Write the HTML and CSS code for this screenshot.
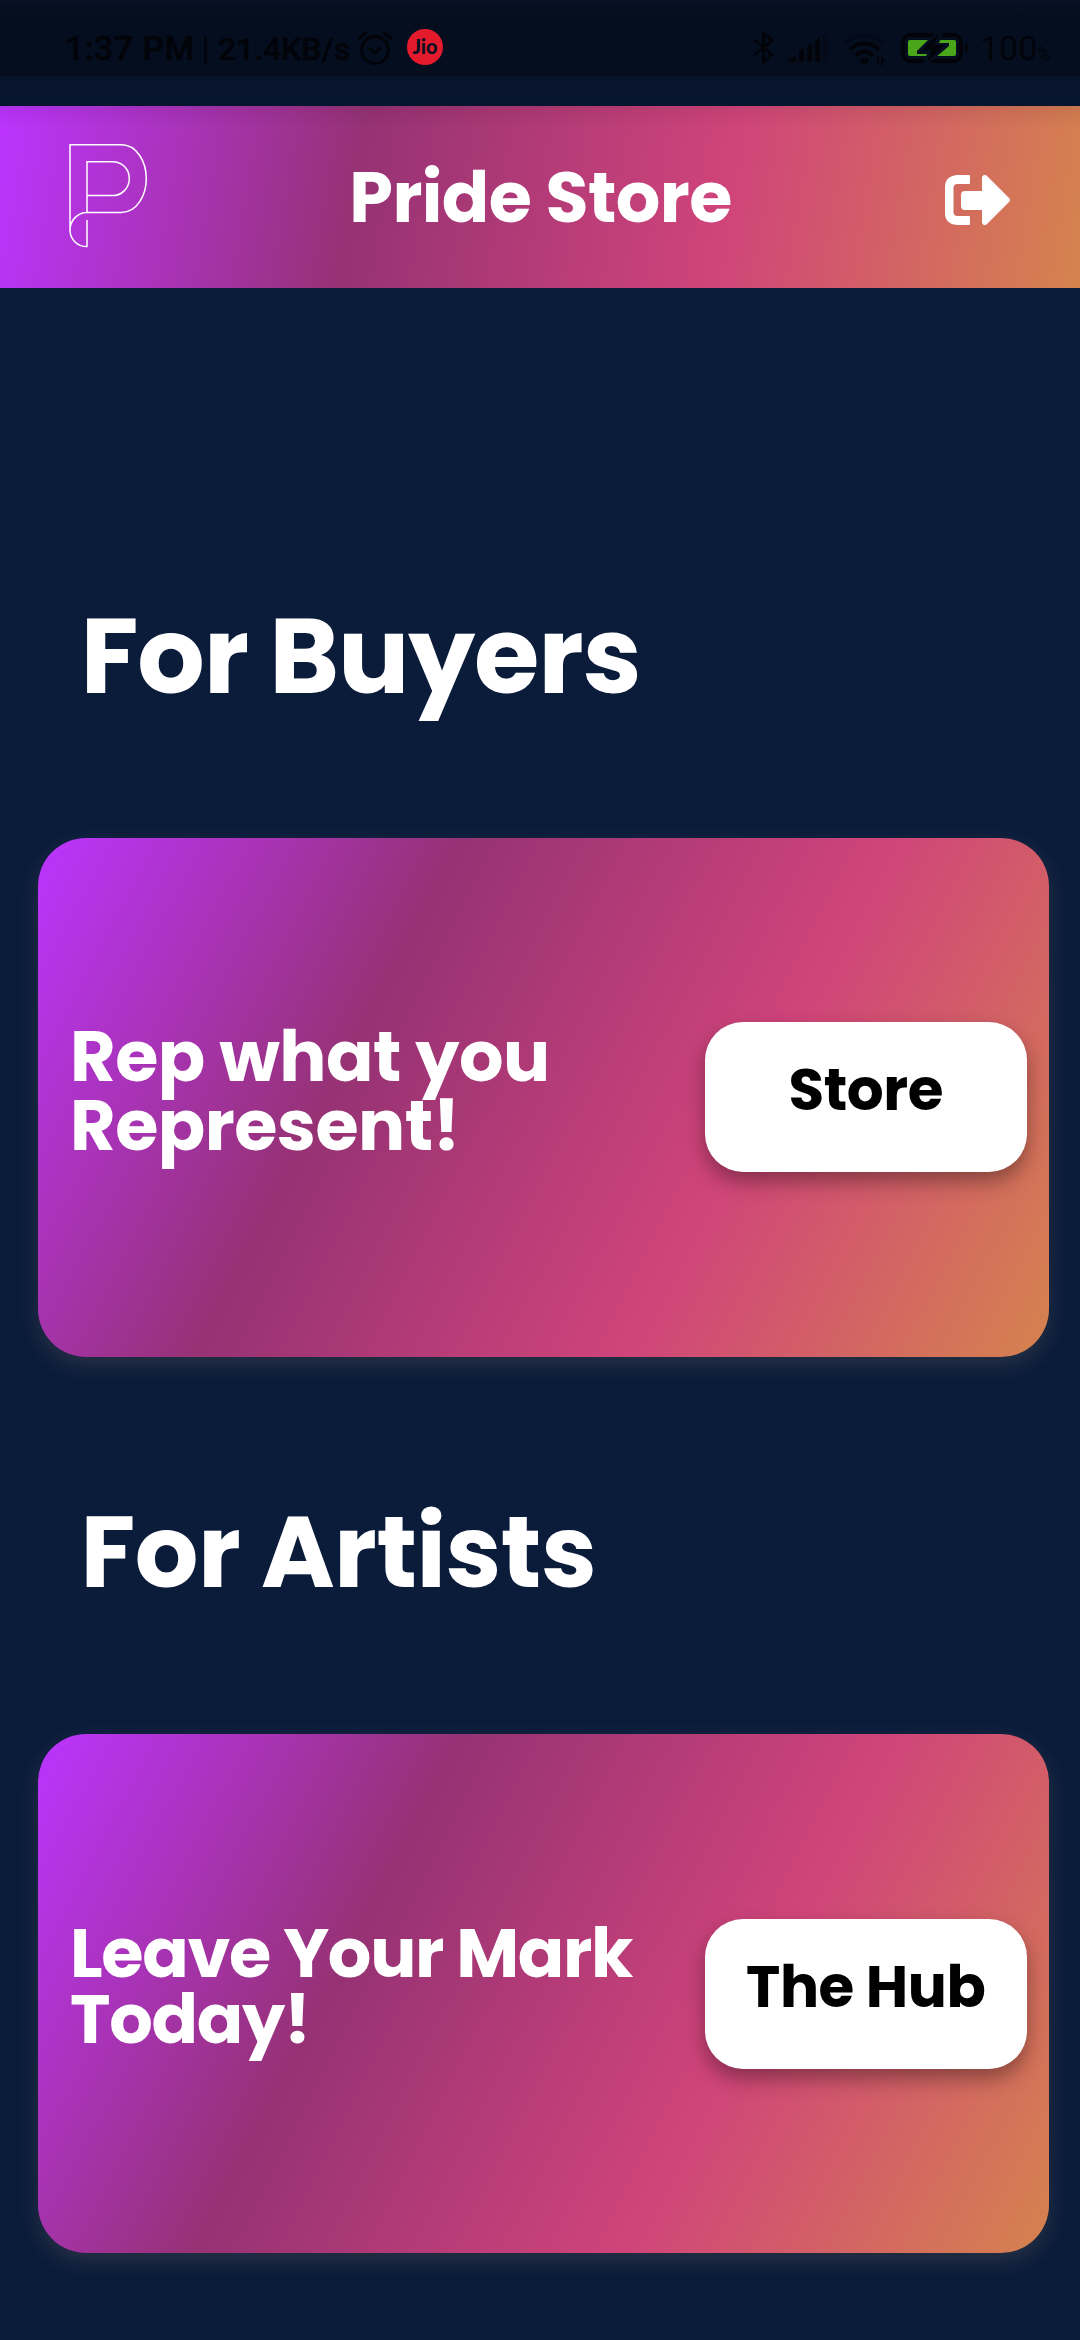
FILE: index.html
```
<!DOCTYPE html>
<html lang="en">
<head>
<meta charset="utf-8">
<title>Pride Store</title>
<link rel="stylesheet" href="styles.css">
</head>
<body>
<div class="status-bar">
  <div class="status-left">
    <span class="clock">1:37 PM</span><span class="divider"></span><span class="speed">21.4KB/s</span>
    <svg class="alarm" viewBox="0 0 36 34" fill="none" stroke="currentColor" stroke-width="3" stroke-linecap="round"><circle cx="18" cy="19" r="13.500"/><path d="M2 7.500L8.500 2M34 7.500L27.500 2M13 17.500l5 4.500 5-4.500"/></svg>
    <span class="jio"><span class="jio-text">Jio</span></span>
  </div>
  <div class="status-right">
    <svg class="bluetooth" viewBox="0 0 22 36" fill="none" stroke="currentColor" stroke-width="2.800" stroke-linejoin="round" stroke-linecap="round"><path d="M2 11L19 25L10.500 33.500V2.500L19 11L2 25"/></svg>
    <svg class="signal" viewBox="0 0 40 30" fill="currentColor"><path d="M0 29q0-2 2-3l6-3v6zM11 18l5-3v14h-5zM19 13l5-3v19h-5zM27 8l5-4v25h-5z"/><path class="faint" d="M35 3l5-3v29h-5z"/></svg>
    <svg class="wifi" viewBox="0 0 42 34" fill="none" stroke="currentColor" stroke-width="4"><path class="faint" d="M1 10.500C11 .5 29 .5 40 10.500"/><path d="M6 16.500C14 8 26 8 35 16.500M12 23C17 17 24 17 29 23"/><path fill="currentColor" stroke="none" d="M16 27c3-3 6-3 9 0q0 2-4.500 5.500Q16 29 16 27zM35 23.500v9.500l-4-4h2v-5.500zM37 33v-9.500l5 5h-3v4.500z"/></svg>
    <svg class="battery" viewBox="0 0 68 30"><rect x="2" y="2" width="58" height="26" rx="7" fill="none" stroke="currentColor" stroke-width="4"/><rect class="charge" x="7" y="7" width="48" height="16" rx="2"/><path class="bolt" d="M34 0h8l-4 10h10v3L28 30h-6l4-9H16v-3z"/><path fill="currentColor" d="M37 1L21 17h10l-5 12 17-17H33zM64 10c5 0 5 10 0 10z"/></svg>
    <span class="percent">100<small>%</small></span>
  </div>
</div>
<header class="app-bar">
  <svg class="logo" viewBox="0 0 79 104" fill="none" stroke="#fff" stroke-width="1.500"><path d="M1 86V.8H52.500C68 .8 77.300 18 77.300 34.500S68 68.500 52.500 68.500H18C8 68.500 1 77 1 86S8 102.600 18 102.600V76M18 68.500V17.700H43.500C53 17.700 60.300 25 60.300 34.500S53 51.600 43.500 51.600H18"/></svg>
  <h1 class="title">Pride Store</h1>
  <svg class="logout" viewBox="0 0 65 50" fill="#fff"><path d="M24 0q1 0 1 1v7q0 1-1 1H12.500Q8.500 9 8.500 13V37Q8.500 41 12.500 41H24q1 0 1 1v7q0 1-1 1H12Q0 49 0 38V12Q0 1 12 0z"/><path d="M37 3C37 0 40-1 42 1L64 23Q66 25 64 27L42 49C40 51 37 50 37 47V35H20Q16 35 16 31V20Q16 16 20 16H37z"/></svg>
</header>
<main>
  <h2 class="heading buyers">For Buyers</h2>
  <section class="card">
    <p class="pitch rep">Rep what you<br>Represent!</p>
    <button class="action store">Store</button>
  </section>
  <h2 class="heading artists">For Artists</h2>
  <section class="card">
    <p class="pitch mark">Leave Your Mark<br>Today!</p>
    <button class="action hub">The Hub</button>
  </section>
</main>
</body>
</html>
```

FILE: styles.css
```
* { box-sizing: border-box; }
body {
  margin: 0;
  width: 1080px;
  height: 2340px;
  overflow: hidden;
  background: #0b1c3b;
  color: #fff;
  font-family: Poppins, Inter, sans-serif;
}
h1, h2, p { margin: 0; font-weight: 700; white-space: nowrap; }

.status-bar {
  height: 106px;
  padding: 0 30px 0 65px;
  display: flex;
  justify-content: space-between;
  color: #020409;
  font-family: Roboto, sans-serif;
  background: linear-gradient(#071225 0, #050e1f 14px, #050e1f 76px, #07142b 76px, #08152f 100%);
}
.status-left, .status-right { display: flex; align-items: flex-start; }
.clock, .speed, .percent { line-height: 40px; margin-top: 28px; white-space: nowrap; }
.clock, .speed { font-weight: 500; -webkit-text-stroke: .5px #020409; }
.clock { font-size: 34px; width: 129px; letter-spacing: .4px; }
.divider { width: 3px; height: 27px; margin: 37px 11px 0 10px; background: #020409; }
.speed { font-size: 32px; width: 131px; margin-top: 29px; letter-spacing: -.1px; }
.alarm { width: 36px; height: 34px; margin: 31px 0 0 8px; }
.jio { width: 36px; height: 36px; margin: 29px 0 0 14px; border-radius: 50%; background: #e41b2c; display: flex; justify-content: center; }
.jio-text { color: #0a1020; font: 900 20px/35px Lato, sans-serif; }
.bluetooth { width: 22px; height: 35px; margin: 30px 13px 0 0; }
.signal { width: 40px; height: 30px; margin: 33px 16px 0 0; }
.wifi { width: 42px; height: 34px; margin: 33px 15px 0 0; }
.battery { width: 68px; height: 30px; margin: 33px 11px 0 0; }
.faint { opacity: .3; }
.charge { fill: #4aa51a; }
.bolt { fill: #050e1f; }
.percent { font-size: 34px; width: 70px; }
.percent small { font-size: 18px; }

.app-bar {
  height: 182px;
  padding: 0 70px 0 69px;
  display: flex;
  justify-content: space-between;
  background:
    linear-gradient(rgba(0, 0, 0, .07), transparent 22px),
    linear-gradient(99.570deg, #bc34ff, #963274 33.300%, #d0447a 66.700%, #d5834e);
}
.logo { width: 79px; height: 104px; margin-top: 38px; }
.title { font-size: 70px; line-height: 84px; margin: 50px 12px 0 0; letter-spacing: -.6px; }
.logout { width: 65px; height: 50px; margin-top: 69px; }

main { padding: 0 31.500px 0 37.500px; }
.heading { padding-left: 43px; }
.buyers { height: 550px; padding-top: 306px; font-size: 106px; line-height: 124px; letter-spacing: -1.150px; }
.artists { height: 377.500px; padding-top: 137px; font-size: 100px; line-height: 116px; letter-spacing: -.5px; }
.card {
  height: 518.700px;
  padding: 0 21.500px 0 32.500px;
  display: flex;
  align-items: center;
  justify-content: space-between;
  border-radius: 48px;
  background: linear-gradient(117.180deg, #bc34ff, #963274 33.300%, #d0447a 66.700%, #d5834e);
  box-shadow: 0 8px 20px rgba(80, 80, 80, .4);
}
.rep { font-size: 70px; line-height: 69px; letter-spacing: -.5px; padding-bottom: 12.600px; }
.mark { font-size: 68.500px; line-height: 65.700px; letter-spacing: -1.300px; padding-bottom: 14px; }
.action {
  width: 322.500px;
  height: 150px;
  padding: 0 0 14px;
  border: 0;
  border-radius: 38px;
  background: #fff;
  color: #000;
  font: 700 58px/68px Poppins, Inter, sans-serif;
  letter-spacing: -.4px;
  box-shadow: 0 10px 20px rgba(0, 0, 0, .35);
}
```
